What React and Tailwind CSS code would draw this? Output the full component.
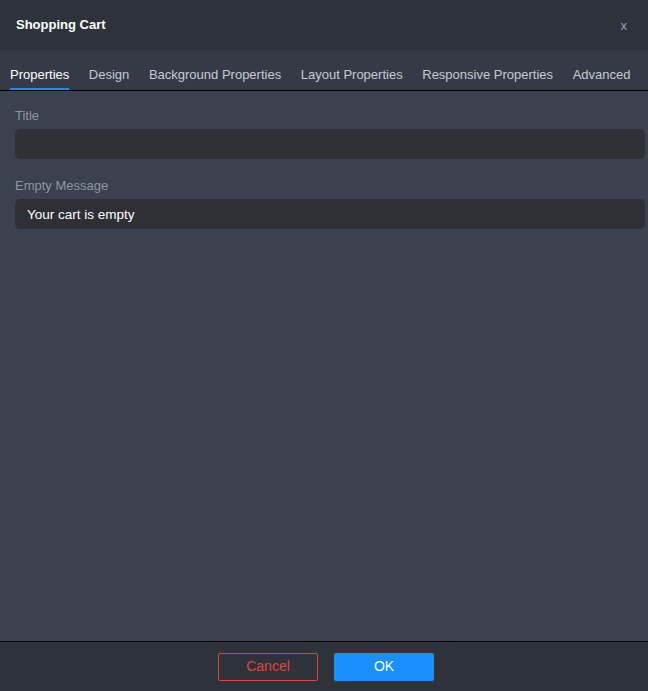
import React, { useState } from 'react';

const tabs = [
  'Properties',
  'Design',
  'Background Properties',
  'Layout Properties',
  'Responsive Properties',
  'Advanced',
];

export default function App() {
  const [active, setActive] = useState('Properties');
  const [title, setTitle] = useState('');
  const [emptyMsg, setEmptyMsg] = useState('Your cart is empty');

  return (
    <div
      className="w-[648px] h-[691px] flex flex-col bg-[#3b414e] text-[13px]"
      style={{ fontFamily: '"Liberation Sans", Arial, sans-serif' }}
    >
      {/* Header */}
      <div className="h-[50px] shrink-0 flex items-center justify-between pl-4 pr-[21px] bg-[#2e323b]">
        <h2 className="text-[13px] font-bold text-white">Shopping Cart</h2>
        <button className="text-[13px] text-gray-400 hover:text-white leading-none">x</button>
      </div>

      {/* Tabs */}
      <div className="h-[41px] shrink-0 flex gap-[19.6px] px-[10px] bg-[#353a46] border-b border-black">
        {tabs.map((t) => (
          <button
            key={t}
            onClick={() => setActive(t)}
            className={`h-full flex items-end pb-[6px] leading-[15px] border-b-2 ${
              active === t ? 'border-[#1a8cff] text-white' : 'border-transparent text-[#c5cad3]'
            }`}
          >
            {t}
          </button>
        ))}
      </div>

      {/* Body */}
      <div className="flex-1 px-[15px] pt-[17px] pr-[3px]">
        <label className="block text-[#8e96a3] leading-4 mb-[5px]">Title</label>
        <input
          type="text"
          value={title}
          onChange={(e) => setTitle(e.target.value)}
          className="w-full h-[30px] px-3 bg-[#2e3036] rounded-[5px] text-white text-[13.5px] outline-none"
        />
        <label className="block text-[#8e96a3] leading-4 mt-[19px] mb-[5px]">Empty Message</label>
        <input
          type="text"
          value={emptyMsg}
          onChange={(e) => setEmptyMsg(e.target.value)}
          className="w-full h-[30px] px-3 bg-[#2e3036] rounded-[5px] text-white text-[13.5px] outline-none"
        />
      </div>

      {/* Footer */}
      <div className="h-[50px] shrink-0 flex items-center justify-center gap-4 pl-[4px] bg-[#2e323b] border-t border-black">
        <button className="w-[100px] h-[28px] border border-[#e0443a] rounded-[2px] text-[#e0443a] text-[14px]">
          Cancel
        </button>
        <button className="w-[100px] h-[28px] bg-[#1a90ff] rounded-[2px] text-white text-[14px]">
          OK
        </button>
      </div>
    </div>
  );
}
